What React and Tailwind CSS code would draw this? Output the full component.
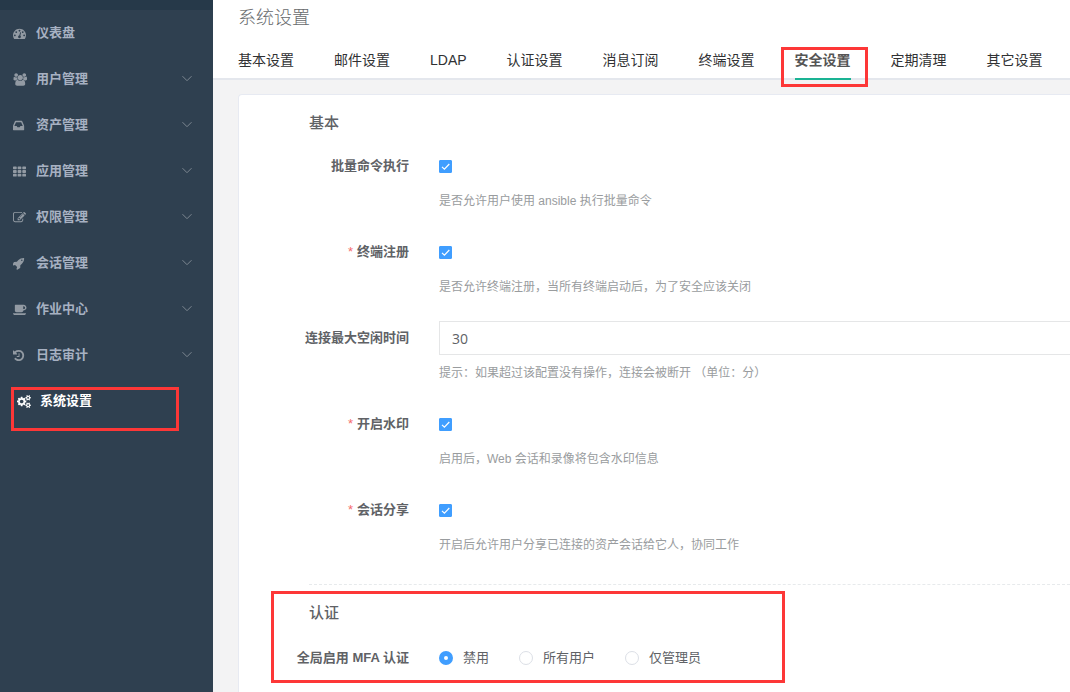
import React, { useState } from 'react';

const icons = {
  dashboard: {
    viewBox: '0 0 1792 1792',
    d: 'M384 1152q0-53-37.5-90.5t-90.5-37.5-90.5 37.5-37.5 90.5 37.5 90.5 90.5 37.5 90.5-37.5 37.5-90.5zm192-448q0-53-37.5-90.5t-90.5-37.5-90.5 37.5-37.5 90.5 37.5 90.5 90.5 37.5 90.5-37.5 37.5-90.5zm428 481l101-382q6-26-7.5-48.5t-38.5-29.5-48 6.5-30 39.5l-101 382q-60 5-107 43.5t-63 98.5q-20 77 20 146t117 89 146-20 89-117q16-60-6-117t-72-91zm660-33q0-53-37.5-90.5t-90.5-37.5-90.5 37.5-37.5 90.5 37.5 90.5 90.5 37.5 90.5-37.5 37.5-90.5zm-640-640q0-53-37.5-90.5t-90.5-37.5-90.5 37.5-37.5 90.5 37.5 90.5 90.5 37.5 90.5-37.5 37.5-90.5zm448 192q0-53-37.5-90.5t-90.5-37.5-90.5 37.5-37.5 90.5 37.5 90.5 90.5 37.5 90.5-37.5 37.5-90.5zm320 448q0 261-141 483-19 29-54 29h-1402q-35 0-54-29-141-221-141-483 0-182 71-348t191-286 286-191 348-71 348 71 286 191 191 286 71 348z'
  },
  users: {
    viewBox: '0 0 1984 1792',
    d: 'M657 896q-162 5-265 128h-134q-82 0-138-40.5t-56-118.5q0-353 124-353 6 0 43.5 21t97.5 42.5 119 21.5q67 0 133-23-5 37-5 66 0 159 90 287zm1071 637q0 120-73 189.5t-194 69.5h-874q-121 0-194-69.5t-73-189.5q0-53 3.5-103.5t14-109 26.5-108.5 43-97.5 62-81 85.5-53.5 111.5-20q10 0 43 21.5t73 48 107 48 135 21.5 135-21.5 107-48 73-48 43-21.5q61 0 111.5 20t85.5 53.5 62 81 43 97.5 26.5 108.5 14 109 3.5 103.5zm-1024-1277q0 106-75 181t-181 75-181-75-75-181 75-181 181-75 181 75 75 181zm704 384q0 159-112.5 271.5t-271.5 112.5-271.5-112.5-112.5-271.5 112.5-271.5 271.5-112.5 271.5 112.5 112.5 271.5zm576 225q0 78-56 118.5t-138 40.5h-134q-103-123-265-128 90-128 90-287 0-29-5-66 66 23 133 23 59 0 119-21.5t97.5-42.5 43.5-21q124 0 124 353zm-128-609q0 106-75 181t-181 75-181-75-75-181 75-181 181-75 181 75 75 181z'
  },
  inbox: {
    viewBox: '128 0 1536 1792',
    d: 'M1151 960h316q-1-3-2.5-8.5t-2.5-7.5l-212-496h-708l-212 496q-1 3-2.5 8.5t-2.5 7.5h316l95 192h320zm513 30v482q0 26-19 45t-45 19h-1408q-26 0-45-19t-19-45v-482q0-62 25-123l238-552q10-25 36.5-42t52.5-17h832q26 0 52.5 17t36.5 42l238 552q25 61 25 123z'
  },
  grid: {
    viewBox: '0 0 1792 1792',
    d: 'M96 192h320q96 0 96 96v192q0 96-96 96h-320q-96 0-96-96v-192q0-96 96-96zm640 0h320q96 0 96 96v192q0 96-96 96h-320q-96 0-96-96v-192q0-96 96-96zm640 0h320q96 0 96 96v192q0 96-96 96h-320q-96 0-96-96v-192q0-96 96-96zM96 704h320q96 0 96 96v192q0 96-96 96h-320q-96 0-96-96v-192q0-96 96-96zm640 0h320q96 0 96 96v192q0 96-96 96h-320q-96 0-96-96v-192q0-96 96-96zm640 0h320q96 0 96 96v192q0 96-96 96h-320q-96 0-96-96v-192q0-96 96-96zM96 1216h320q96 0 96 96v192q0 96-96 96h-320q-96 0-96-96v-192q0-96 96-96zm640 0h320q96 0 96 96v192q0 96-96 96h-320q-96 0-96-96v-192q0-96 96-96zm640 0h320q96 0 96 96v192q0 96-96 96h-320q-96 0-96-96v-192q0-96 96-96z'
  },
  edit: {
    viewBox: '0 0 1792 1792',
    d: 'M888 1184l116-116-152-152-116 116v56h96v96h56zm440-720q-16-16-33 1l-350 350q-17 17-1 33t33-1l350-350q17-17 1-33zm80 594v190q0 119-84.5 203.5t-203.5 84.5h-832q-119 0-203.5-84.5t-84.5-203.5v-832q0-119 84.5-203.5t203.5-84.5h832q63 0 117 25 15 7 18 23 3 17-9 29l-49 49q-14 14-32 8-23-6-45-6h-832q-66 0-113 47t-47 113v832q0 66 47 113t113 47h832q66 0 113-47t47-113v-126q0-13 9-22l64-64q15-15 35-7t20 29zm-96-738l288 288-672 672h-288v-288zm444 132l-92 92-288-288 92-92q28-28 68-28t68 28l152 152q28 28 28 68t-28 68z'
  },
  rocket: {
    viewBox: '128 0 1536 1792',
    d: 'M1440 448q0-40-28-68t-68-28-68 28-28 68 28 68 68 28 68-28 28-68zm224-288q0 249-75.5 430.5t-253.5 360.5q-81 80-195 176l-20 379q-2 16-16 26l-384 224q-7 4-16 4-12 0-23-9l-64-64q-13-14-8-32l85-276-281-281-276 85q-3 1-9 1-14 0-23-9l-64-64q-17-19-5-39l224-384q10-14 26-16l379-20q96-114 176-195 188-187 358-258t431-71q14 0 24 9.5t10 22.5z'
  },
  coffee: {
    viewBox: '0 0 1856 1792',
    d: 'M1664 640q0-80-56-136t-136-56h-64v384h64q80 0 136-56t56-136zm-1664 768h1792q0 106-75 181t-181 75h-1280q-106 0-181-75t-75-181zm1856-768q0 159-112.5 271.5t-271.5 112.5h-64v32q0 92-66 158t-158 66h-704q-92 0-158-66t-66-158v-736q0-26 19-45t45-19h1152q159 0 271.5 112.5t112.5 271.5z'
  },
  history: {
    viewBox: '128 0 1536 1792',
    d: 'M1664 896q0 156-61 298t-164 245-245 164-298 61q-172 0-327-72.5t-264-204.5q-7-10-6.5-22.5t8.5-20.5l137-138q10-9 25-9 16 2 23 12 73 95 179 147t225 52q104 0 198.5-40.5t163.5-109.5 109.5-163.5 40.5-198.5-40.5-198.5-109.5-163.5-163.5-109.5-198.5-40.5q-98 0-188 35.5t-160 101.5l137 138q31 30 14 69-17 40-59 40h-448q-26 0-45-19t-19-45v-448q0-42 40-59 39-17 69 14l130 129q107-101 244.5-156.5t284.5-55.5q156 0 298 61t245 164 164 245 61 298zm-640-288v448q0 14-9 23t-23 9h-320q-14 0-23-9t-9-23v-64q0-14 9-23t23-9h224v-352q0-14 9-23t23-9h64q14 0 23 9t9 23z'
  },
  cogs: {
    viewBox: '0 0 1920 1792',
    d: 'M896 896q0-106-75-181t-181-75-181 75-75 181 75 181 181 75 181-75 75-181zm768 512q0-52-38-90t-90-38-90 38-38 90q0 53 37.5 90.5t90.5 37.5 90.5-37.5 37.5-90.5zm0-1024q0-52-38-90t-90-38-90 38-38 90q0 53 37.5 90.5t90.5 37.5 90.5-37.5 37.5-90.5zm-384 421v185q0 10-7 19.5t-16 10.5l-155 24q-11 35-32 76 34 48 90 115 7 11 7 20 0 12-7 19-23 30-82.5 89.5t-78.5 59.5q-11 0-21-7l-115-90q-37 19-77 31-11 108-23 155-7 24-30 24h-186q-11 0-20-7.5t-10-17.5l-23-153q-34-10-75-31l-118 89q-7 7-20 7-11 0-21-8-144-133-144-160 0-9 7-19 10-14 41-53t47-61q-23-44-35-82l-152-24q-10-1-17-9.5t-7-19.5v-185q0-10 7-19.5t16-10.5l155-24q11-35 32-76-34-48-90-115-7-11-7-20 0-12 7-20 22-30 82-89t79-59q11 0 21 7l115 90q34-18 77-32 11-108 23-154 7-24 30-24h186q11 0 20 7.5t10 17.5l23 153q34 10 75 31l118-89q8-7 20-7 11 0 21 8 144 133 144 160 0 8-7 19-12 16-42 54t-45 60q23 48 34 82l152 23q10 2 17 10.5t7 19.5zm640 533v140q0 16-149 31-12 27-30 52 51 113 51 138 0 4-4 7-122 71-124 71-8 0-46-47t-52-68q-20 2-30 2t-30-2q-14 21-52 68t-46 47q-2 0-124-71-4-3-4-7 0-25 51-138-18-25-30-52-149-15-149-31v-140q0-16 149-31 13-29 30-52-51-113-51-138 0-4 4-7 4-2 35-20t59-34 30-16q8 0 46 46.5t52 67.5q20-2 30-2t30 2q51-71 92-112l6-2q4 0 124 70 4 3 4 7 0 25-51 138 17 23 30 52 149 15 149 31zm0-1024v140q0 16-149 31-12 27-30 52 51 113 51 138 0 4-4 7-122 71-124 71-8 0-46-47t-52-68q-20 2-30 2t-30-2q-14 21-52 68t-46 47q-2 0-124-71-4-3-4-7 0-25 51-138-18-25-30-52-149-15-149-31v-140q0-16 149-31 13-29 30-52-51-113-51-138 0-4 4-7 4-2 35-20t59-34 30-16q8 0 46 46.5t52 67.5q20-2 30-2t30 2q51-71 92-112l6-2q4 0 124 70 4 3 4 7 0 25-51 138 17 23 30 52 149 15 149 31z'
  }
};

const menuItems = [
  { icon: 'dashboard', label: '仪表盘' },
  { icon: 'users', label: '用户管理', children: true },
  { icon: 'inbox', label: '资产管理', children: true },
  { icon: 'grid', label: '应用管理', children: true },
  { icon: 'edit', label: '权限管理', children: true },
  { icon: 'rocket', label: '会话管理', children: true },
  { icon: 'coffee', label: '作业中心', children: true },
  { icon: 'history', label: '日志审计', children: true },
  { icon: 'cogs', label: '系统设置', active: true }
];

const tabs = ['基本设置', '邮件设置', 'LDAP', '认证设置', '消息订阅', '终端设置', '安全设置', '定期清理', '其它设置'];

const basicFields = [
  { id: 'command', label: '批量命令执行', type: 'checkbox', help: '是否允许用户使用 ansible 执行批量命令' },
  { id: 'register', label: '终端注册', type: 'checkbox', required: true, help: '是否允许终端注册，当所有终端启动后，为了安全应该关闭' },
  { id: 'idle', label: '连接最大空闲时间', type: 'text', help: '提示：如果超过该配置没有操作，连接会被断开 （单位：分）' },
  { id: 'watermark', label: '开启水印', type: 'checkbox', required: true, help: '启用后，Web 会话和录像将包含水印信息' },
  { id: 'share', label: '会话分享', type: 'checkbox', required: true, help: '开启后允许用户分享已连接的资产会话给它人，协同工作' }
];

const mfaOptions = ['禁用', '所有用户', '仅管理员'];

function Highlight({ className }) {
  return <div aria-hidden="true" className={`absolute z-10 pointer-events-none border-3 border-[#fd3737] ${className}`} />;
}

function Sidebar() {
  return (
    <aside className="w-[213px] shrink-0 bg-[#2f4050]">
      <div className="h-[10px] bg-[#263949]" />
      <ul>
        {menuItems.map(item => (
          <li key={item.label} className="relative">
            <a
              href="#"
              className={`flex items-center h-[46px] pr-5 text-[13px] font-bold ${
                item.active ? 'pl-[17px] text-white' : 'pl-[13px] text-[#a7b1c2]'
              }`}
            >
              <svg
                viewBox={icons[item.icon].viewBox}
                preserveAspectRatio="xMinYMid meet"
                className={`w-[14px] h-[13px] mr-[9px] ${item.active ? 'fill-white' : 'fill-[#929aa3]'}`}
              >
                <path d={icons[item.icon].d} />
              </svg>
              <span className="flex-1">{item.label}</span>
              {item.children && (
                <svg viewBox="0 0 12 12" className="w-3 h-3 fill-none stroke-[#7d8791]">
                  <path d="M1.5 3.2 6 7.7l4.5-4.5" />
                </svg>
              )}
            </a>
            {item.active && <Highlight className="left-[11px] top-[9px] w-[168px] h-[44px]" />}
          </li>
        ))}
      </ul>
    </aside>
  );
}

function Header() {
  const [activeTab, setActiveTab] = useState('安全设置');

  return (
    <header className="bg-white">
      <h1 className="pl-[25px] text-lg leading-9 font-light text-[#676a6c]">系统设置</h1>
      <nav className="flex gap-10 h-[38px] mt-1.5 pl-[25px] border-b-2 border-[#e4e7ed]">
        {tabs.map(tab => (
          <div key={tab} className="relative shrink-0">
            <button
              type="button"
              onClick={() => setActiveTab(tab)}
              className={`h-[38px] text-sm border-b-2 whitespace-nowrap ${
                activeTab === tab
                  ? 'border-[#1ab394] font-bold text-[#555]'
                  : 'border-transparent text-[#303133]'
              }`}
            >
              {tab}
            </button>
            {tab === '安全设置' && <Highlight className="-left-[14px] top-[5px] w-[87px] h-[40px]" />}
          </div>
        ))}
      </nav>
    </header>
  );
}

function Checkbox({ id }) {
  const [checked, setChecked] = useState(true);

  return (
    <span className="relative flex">
      <input
        id={id}
        type="checkbox"
        checked={checked}
        onChange={() => setChecked(!checked)}
        className="appearance-none w-[13px] h-[13px] rounded-[1px] border border-[#dcdfe6] checked:border-[#409eff] checked:bg-[#409eff]"
      />
      {checked && (
        <svg viewBox="0 0 13 13" className="absolute inset-0 w-[13px] h-[13px] pointer-events-none fill-none stroke-white">
          <path d="M3 6.8 5.4 9.2 10.3 4" strokeWidth="1.2" />
        </svg>
      )}
    </span>
  );
}

function FormRow({ id, label, required, help, children }) {
  return (
    <div className="flex mb-4">
      <label htmlFor={id} className="w-[170px] shrink-0 text-right text-[13px] leading-[34px] font-bold text-[#606266]">
        {required && <span className="mr-1 font-normal text-[#f56c6c]">*</span>}
        {label}
      </label>
      <div className="flex-1 min-w-0 ml-[30px]">
        <div className="flex items-center h-[34px]">{children}</div>
        <p className="text-xs leading-9 text-[#999c9e]">{help}</p>
      </div>
    </div>
  );
}

function SecurityForm() {
  const [idleTime, setIdleTime] = useState('30');
  const [mfa, setMfa] = useState('禁用');

  return (
    <form className="flex-1 ml-[25px] mt-[14px] pt-3 bg-white border border-r-0 border-b-0 border-[#e7eaf2] rounded-tl-sm">
      <h2 className="ml-[70px] mb-[10px] text-[15px] leading-8 font-medium text-[#606266]">基本</h2>
      {basicFields.map(field => (
        <FormRow key={field.id} {...field}>
          {field.type === 'checkbox' ? (
            <Checkbox id={field.id} />
          ) : (
            <input
              id={field.id}
              type="text"
              value={idleTime}
              onChange={e => setIdleTime(e.target.value)}
              className="w-full h-[34px] px-3 border border-r-0 border-[#e5e6e7] font-['Open_Sans',sans-serif] text-sm text-[#606266]"
            />
          )}
        </FormRow>
      ))}

      <div className="relative pt-[5px]">
        <Highlight className="left-8 top-3 w-[514px] h-[92px]" />
        <hr className="ml-[70px] mb-3 border-dashed border-[#e7eaec]" />
        <h2 className="ml-[70px] mb-3 text-[15px] leading-8 font-medium text-[#606266]">认证</h2>
        <div role="radiogroup" aria-labelledby="mfa-label" className="flex items-center h-[34px]">
          <span id="mfa-label" className="w-[170px] shrink-0 text-right text-[13px] font-bold text-[#606266]">全局启用 MFA 认证</span>
          <div className="flex gap-[30px] ml-[30px]">
            {mfaOptions.map(option => (
              <label key={option} className="flex items-center gap-[10px] text-[13px] text-[#606266]">
                <input
                  type="radio"
                  name="mfa"
                  checked={mfa === option}
                  onChange={() => setMfa(option)}
                  className="appearance-none w-[14px] h-[14px] rounded-full bg-white border border-[#dcdfe6] checked:border-5 checked:border-[#409eff]"
                />
                {option}
              </label>
            ))}
          </div>
        </div>
      </div>
    </form>
  );
}

export default function App() {
  return (
    <div className="flex min-h-screen font-['Liberation_Sans','Noto_Sans_CJK_SC',sans-serif]">
      <Sidebar />
      <main className="flex flex-col flex-1 min-w-0 overflow-hidden bg-[#f3f3f4]">
        <Header />
        <SecurityForm />
      </main>
    </div>
  );
}
